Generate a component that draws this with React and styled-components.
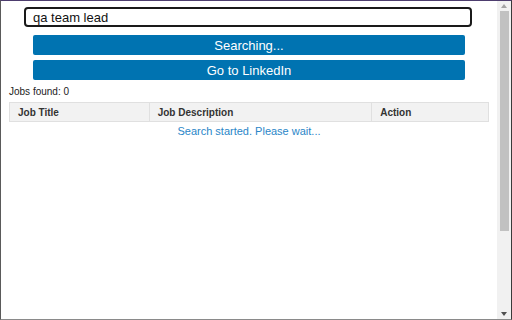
import React from 'react';
import styled, { createGlobalStyle } from 'styled-components';

const GlobalStyle = createGlobalStyle`
  html, body {
    margin: 0;
    padding: 0;
    background: #fff;
    font-family: "Liberation Sans", Arial, sans-serif;
  }
`;

const Frame = styled.div`
  width: 512px;
  height: 320px;
  box-sizing: border-box;
  border-top: 1px solid #4d3d6e;
  border-left: 1px solid #5a5a5a;
  border-right: 1px solid #3a3a3a;
  border-bottom: 1px solid #8a8a8a;
  display: flex;
  overflow: hidden;
`;

const Content = styled.div`
  flex: 1;
  display: flex;
  flex-direction: column;
  align-items: center;
  padding-top: 6px;
`;

const SearchInput = styled.input`
  width: 448px;
  height: 20px;
  box-sizing: border-box;
  border: 2px solid #1a1a1a;
  border-radius: 4px;
  padding: 0 7px;
  font-family: "Liberation Sans", Arial, sans-serif;
  font-size: 13px;
  color: #111;
  outline: none;
  margin-left: -2px;
`;

const Button = styled.button`
  width: 432px;
  height: 20px;
  margin-top: ${p => p.$gap}px;
  border: none;
  border-radius: 2px;
  background: #0073b1;
  color: #fff;
  font-family: "Liberation Sans", Arial, sans-serif;
  font-size: 13px;
  padding: 0;
  cursor: pointer;
`;

const Count = styled.div`
  align-self: stretch;
  padding-left: 8px;
  margin-top: 6px;
  font-size: 10px;
  color: #222;
  line-height: 12px;
`;

const Table = styled.table`
  width: 480px;
  margin-top: 4px;
  border-collapse: collapse;
  font-size: 10px;

  th {
    background: #f2f2f2;
    border: 1px solid #e0e0e0;
    text-align: left;
    font-weight: bold;
    color: #333;
    height: 19px;
    padding: 0 8px;
    box-sizing: border-box;
  }
`;

const Status = styled.td`
  text-align: center;
  color: #2a86c8;
  font-size: 11px;
  height: 17px;
  padding: 0;
`;

const Scrollbar = styled.div`
  width: 14px;
  background: #f1f1f1;
  display: flex;
  flex-direction: column;
  align-items: center;
`;

const Arrow = styled.div`
  height: 10px;
  display: flex;
  align-items: center;
  justify-content: center;
`;

const Thumb = styled.div`
  width: 9px;
  height: 220px;
  background: #c1c1c1;
`;

const Spacer = styled.div`
  flex: 1;
`;

export default function App() {
  return (
    <>
      <GlobalStyle />
      <Frame>
        <Content>
          <SearchInput defaultValue="qa team lead" spellCheck={false} />
          <Button $gap={8}>Searching...</Button>
          <Button $gap={5}>Go to LinkedIn</Button>
          <Count>Jobs found: 0</Count>
          <Table>
            <colgroup>
              <col style={{ width: 140 }} />
              <col style={{ width: 223 }} />
              <col style={{ width: 117 }} />
            </colgroup>
            <thead>
              <tr>
                <th>Job Title</th>
                <th>Job Description</th>
                <th>Action</th>
              </tr>
            </thead>
            <tbody>
              <tr>
                <Status colSpan={3}>Search started. Please wait...</Status>
              </tr>
            </tbody>
          </Table>
        </Content>
        <Scrollbar>
          <Arrow>
            <svg width="6" height="4" viewBox="0 0 6 4"><path d="M3 0L6 4H0z" fill="#a3a3a3" /></svg>
          </Arrow>
          <Thumb />
          <Spacer />
          <Arrow>
            <svg width="6" height="4" viewBox="0 0 6 4"><path d="M0 0H6L3 4z" fill="#505050" /></svg>
          </Arrow>
        </Scrollbar>
      </Frame>
    </>
  );
}
